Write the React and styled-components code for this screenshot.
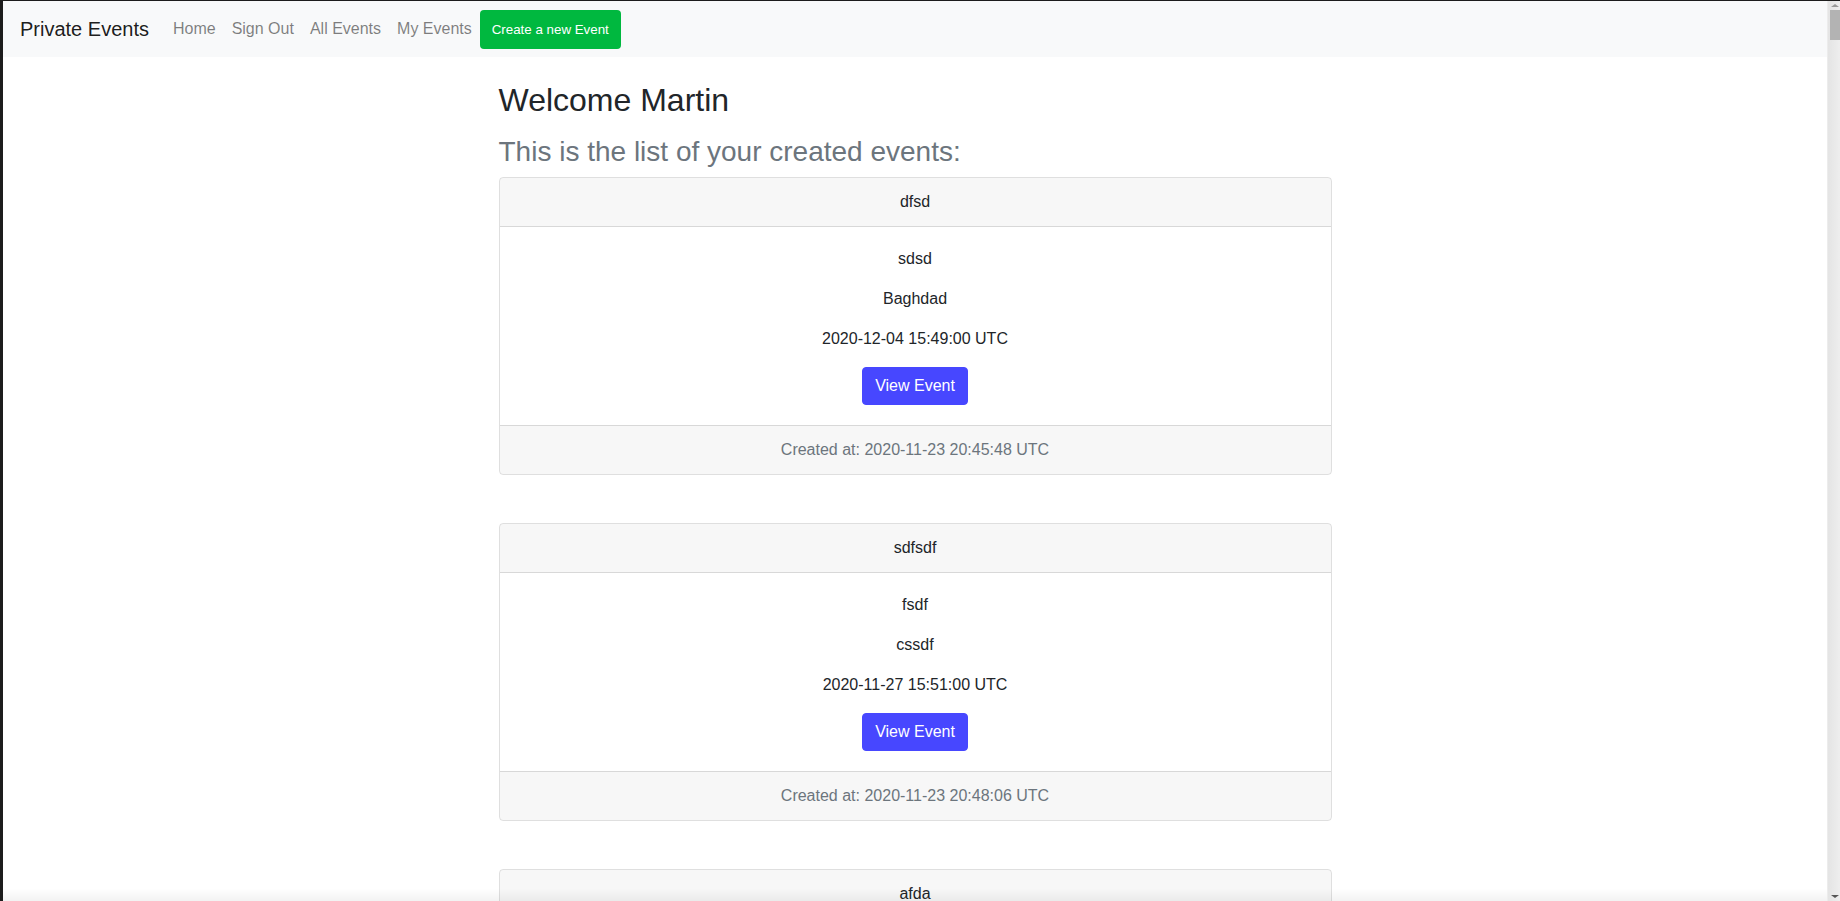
import React from 'react';
import styled, { createGlobalStyle } from 'styled-components';

const GlobalStyle = createGlobalStyle`
  * {
    box-sizing: border-box;
  }
  body {
    margin: 0;
    padding-right: 13px;
    border-top: 1px solid #1c1c1c;
    border-left: 3px solid #1c1c1c;
    font-family: "Liberation Sans", Arial, sans-serif;
    font-size: 16px;
    line-height: 1.5;
    color: #212529;
    background: #fff;
  }
`

const Navbar = styled.nav`
  display: flex;
  align-items: center;
  height: 56px;
  padding: 8px 16px 8px 17px;
  background-color: #f8f9fa;
`
const Brand = styled.a`
  font-size: 20px;
  line-height: 30px;
  padding: 5px 0;
  margin-right: 16px;
  color: rgba(0, 0, 0, 0.9);
  text-decoration: none;
`
const NavLink = styled.a`
  padding: 8px;
  line-height: 24px;
  color: rgba(0, 0, 0, 0.5);
  text-decoration: none;
`
const CreateButton = styled.button`
  height: 39px;
  padding: 0 12px;
  border: none;
  border-radius: 4px;
  background-color: #00b83f;
  color: #fff;
  font-family: "Liberation Sans", Arial, sans-serif;
  font-size: 13.333px;
  cursor: pointer;
`

const Main = styled.main`
  width: 833px;
  margin: 24px auto 0;
`
const Title = styled.h2`
  margin: 0 0 16px;
  font-size: 32px;
  font-weight: 500;
  line-height: 1.2;
`
const Subtitle = styled.h3`
  margin: 0 0 8px;
  font-size: 28px;
  font-weight: 500;
  line-height: 1.2;
  color: #6c757d;
`

const Card = styled.div`
  border: 1px solid rgba(0, 0, 0, 0.125);
  border-radius: 4px;
  margin-bottom: 48px;
  text-align: center;
  overflow: hidden;
`
const CardHeader = styled.div`
  padding: 12px 20px;
  background-color: rgba(0, 0, 0, 0.03);
  border-bottom: 1px solid rgba(0, 0, 0, 0.125);
`
const CardBody = styled.div`
  padding: 20px;
`
const Line = styled.p`
  margin: 0 0 16px;
`
const ViewButton = styled.a`
  display: inline-block;
  padding: 6px 12px;
  border: 1px solid #4747ff;
  border-radius: 4px;
  background-color: #4747ff;
  color: #fff;
  line-height: 24px;
  text-decoration: none;
`
const CardFooter = styled.div`
  padding: 12px 20px;
  background-color: rgba(0, 0, 0, 0.03);
  border-top: 1px solid rgba(0, 0, 0, 0.125);
  color: #6c757d;
`

// browser chrome seen in the screenshot: scrollbar and bottom shade
const ScrollTrack = styled.div`
  position: fixed;
  top: 1px;
  right: 0;
  bottom: 0;
  width: 13px;
  background: linear-gradient(to right, #e4e4e4, #eeeeee);
  border-left: 1px solid #ececec;
`
const ScrollThumb = styled.div`
  position: absolute;
  top: 9px;
  left: 2px;
  width: 10px;
  height: 30px;
  background-color: #b3b3b3;
`
const Arrow = styled.div`
  position: absolute;
  left: 3px;
  width: 0;
  height: 0;
  border-left: 4px solid transparent;
  border-right: 4px solid transparent;
  ${(p) => p.down
    ? 'bottom: 3px; border-top: 3px solid #555;'
    : 'top: 3px; border-bottom: 3px solid #999;'}
`
const BottomShade = styled.div`
  position: fixed;
  left: 3px;
  right: 13px;
  bottom: 0;
  height: 12px;
  background: linear-gradient(to bottom, rgba(0, 0, 0, 0), rgba(0, 0, 0, 0.05));
  pointer-events: none;
`

const events = [
  { id: 1, name: 'dfsd', description: 'sdsd', location: 'Baghdad', date: '2020-12-04 15:49:00 UTC', created: '2020-11-23 20:45:48 UTC' },
  { id: 2, name: 'sdfsdf', description: 'fsdf', location: 'cssdf', date: '2020-11-27 15:51:00 UTC', created: '2020-11-23 20:48:06 UTC' },
  { id: 3, name: 'afda', description: 'asdf', location: 'sdfa', date: '2020-11-30 16:02:00 UTC', created: '2020-11-23 21:02:13 UTC' },
]

export default function App() {
  const renderedEvents = events.map((ev) => {
    return (
      <Card key={ev.id}>
        <CardHeader>{ev.name}</CardHeader>
        <CardBody>
          <Line>{ev.description}</Line>
          <Line>{ev.location}</Line>
          <Line>{ev.date}</Line>
          <ViewButton href="#">View Event</ViewButton>
        </CardBody>
        <CardFooter>Created at: {ev.created}</CardFooter>
      </Card>
    )
  })

  return (
    <>
      <GlobalStyle />
      <Navbar>
        <Brand href="#">Private Events</Brand>
        <NavLink href="#">Home</NavLink>
        <NavLink href="#">Sign Out</NavLink>
        <NavLink href="#">All Events</NavLink>
        <NavLink href="#">My Events</NavLink>
        <CreateButton>Create a new Event</CreateButton>
      </Navbar>
      <Main>
        <Title>Welcome Martin</Title>
        <Subtitle>This is the list of your created events:</Subtitle>
        {renderedEvents}
      </Main>
      <BottomShade />
      <ScrollTrack>
        <Arrow />
        <ScrollThumb />
        <Arrow down />
      </ScrollTrack>
    </>
  )
}
